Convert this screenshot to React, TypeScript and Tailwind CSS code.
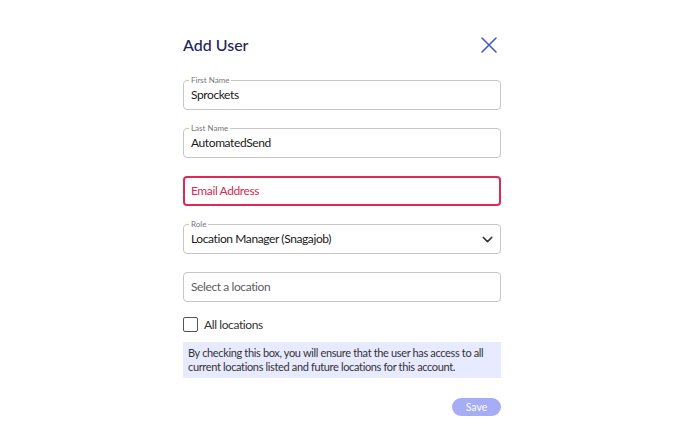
import { ChevronDown } from "lucide-react"

function Field({ label, value, placeholder }: { label?: string; value?: string; placeholder?: string }) {
  return (
    <div className="relative h-[30px] rounded-[4px] border border-[#c6c6c6] flex items-center px-[7px]">
      {label && (
        <span className="absolute -top-[6px] left-[5px] bg-white px-[2px] text-[8px] leading-[10px] text-[#777]">
          {label}
        </span>
      )}
      {value ? (
        <span className="text-[12px] tracking-[-0.4px] text-[#1a1a1a]">{value}</span>
      ) : (
        <span className="text-[12px] tracking-[-0.4px] text-[#5e5e5e]">{placeholder}</span>
      )}
    </div>
  )
}

export default function App() {
  return (
    <div className="w-[688px] h-[436px] bg-white pl-[183px]" style={{ fontFamily: "Lato, 'Open Sans', sans-serif" }}>
      <div className="w-[318px] pt-[35px]">
        <div className="flex items-center justify-between h-[20px]">
          <h2 className="text-[16px] font-medium text-[#1f2459]">Add User</h2>
          <svg width="18" height="18" viewBox="0 0 18 18" className="mr-[3px]">
            <path d="M2 2 L16 16 M16 2 L2 16" stroke="#4757c9" strokeWidth="1.6" strokeLinecap="round" />
          </svg>
        </div>

        <div className="mt-[25px] flex flex-col gap-[18px]">
          <Field label="First Name" value="Sprockets" />
          <Field label="Last Name" value="AutomatedSend" />
          <div className="h-[30px] rounded-[4px] border-2 border-[#dc2a55] flex items-center px-[6px]">
            <span className="text-[12px] tracking-[-0.4px] text-[#d62a52]">Email Address</span>
          </div>
          <div className="relative h-[30px] rounded-[4px] border border-[#c6c6c6] flex items-center justify-between pl-[7px] pr-[4px]">
            <span className="absolute -top-[6px] left-[5px] bg-white px-[2px] text-[8px] leading-[10px] text-[#777]">
              Role
            </span>
            <span className="text-[12px] tracking-[-0.4px] text-[#1a1a1a]">Location Manager (Snagajob)</span>
            <ChevronDown size={17} strokeWidth={2} className="text-[#333]" />
          </div>
          <Field placeholder="Select a location" />
        </div>

        <div className="mt-[15px] flex items-center gap-[6px] h-[15px]">
          <div className="w-[15px] h-[15px] rounded-[2px] border border-[#555]" />
          <span className="text-[12px] leading-[15px] tracking-[-0.4px] text-[#333]">All locations</span>
        </div>

        <div className="mt-[10px] h-[36px] bg-[#e8eaff] px-[5px] pt-[4px] text-[11px] leading-[14px] tracking-[-0.35px] text-[#333]">
          By checking this box, you will ensure that the user has access to all current locations listed and future
          locations for this account.
        </div>

        <div className="mt-[20px] flex justify-end">
          <button className="w-[49px] h-[18px] rounded-full bg-[#a6adf6] text-white text-[10.5px] leading-[18px]">
            Save
          </button>
        </div>
      </div>
    </div>
  )
}
